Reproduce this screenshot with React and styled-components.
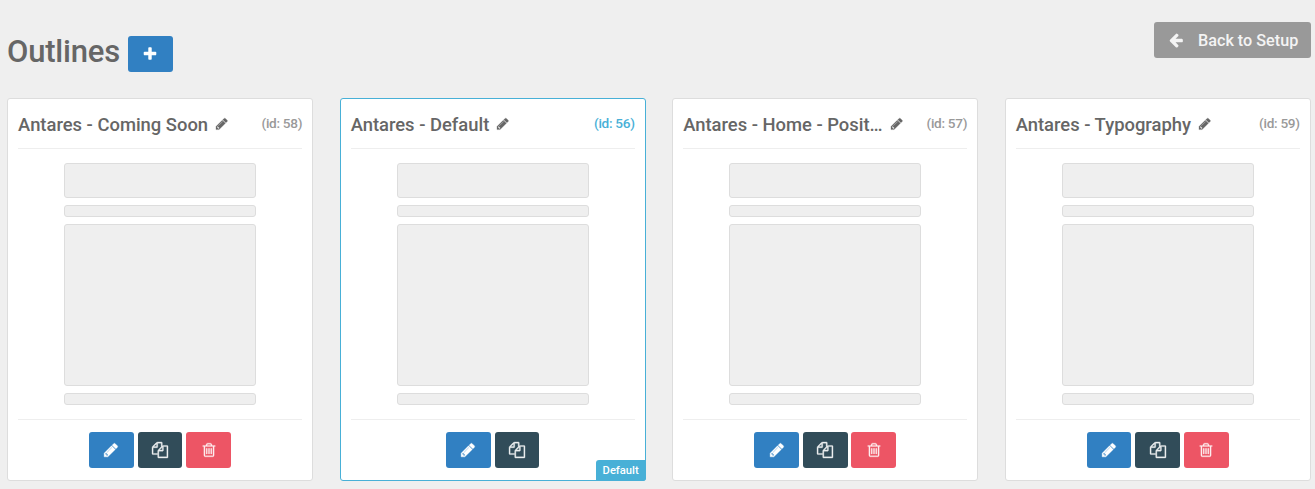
import React from "react";
import styled, { createGlobalStyle } from "styled-components";

const GlobalStyle = createGlobalStyle`
  *, *::before, *::after { box-sizing: border-box; }
  body {
    margin: 0;
    background: #efefef;
    color: #666;
    font-family: Roboto, "Liberation Sans", sans-serif;
    font-size: 16px;
    font-weight: 500;
    overflow: hidden;
  }
`;

const ICONS = {
  plus: "M1600 736v192q0 40-28 68t-68 28h-416v416q0 40-28 68t-68 28h-192q-40 0-68-28t-28-68v-416h-416q-40 0-68-28t-28-68v-192q0-40 28-68t68-28h416v-416q0-40 28-68t68-28h192q40 0 68 28t28 68v416h416q40 0 68 28t28 68z",
  arrow: "M1664 896v128q0 53-32.5 90.5t-84.5 37.5h-704l293 294q38 36 38 90t-38 90l-75 76q-37 37-90 37-52 0-91-37l-651-652q-37-37-37-90 0-52 37-91l651-650q38-38 91-38 52 0 90 38l75 74q38 38 38 91t-38 91l-293 293h704q52 0 84.5 37.5t32.5 90.5z",
  pencil: "M491 1536l91-91-235-235-91 91v107h128v128h107zm523-928q0-22-22-22-10 0-17 7l-542 542q-7 7-7 17 0 22 22 22 10 0 17-7l542-542q7-7 7-17zm-54-192l416 416-832 832h-416v-416zm683 96q0 53-37 90l-166 166-416-416 166-165q36-38 90-38 53 0 91 38l235 234q37 39 37 91z",
  copy: "M1696 384q40 0 68 28t28 68v1216q0 40-28 68t-68 28h-960q-40 0-68-28t-28-68v-288h-544q-40 0-68-28t-28-68v-672q0-40 20-88t48-76l408-408q28-28 76-48t88-20h416q40 0 68 28t28 68v328q68-40 128-40h416zm-544 213l-299 299h299v-299zm-640-384l-299 299h299v-299zm196 647l316-316v-416h-384v416q0 40-28 68t-68 28h-416v640h512v-256q0-40 20-88t48-76zm956 804v-1152h-384v416q0 40-28 68t-68 28h-416v640h896z",
  trash: "M704 736v576q0 14-9 23t-23 9h-64q-14 0-23-9t-9-23v-576q0-14 9-23t23-9h64q14 0 23 9t9 23zm256 0v576q0 14-9 23t-23 9h-64q-14 0-23-9t-9-23v-576q0-14 9-23t23-9h64q14 0 23 9t9 23zm256 0v576q0 14-9 23t-23 9h-64q-14 0-23-9t-9-23v-576q0-14 9-23t23-9h64q14 0 23 9t9 23zm128 724v-948h-896v948q0 22 7 40.5t14.5 27 10.5 8.5h832q3 0 10.5-8.5t14.5-27 7-40.5zm-672-1076h448l-48-117q-7-9-17-11h-317q-10 2-17 11zm928 32v64q0 14-9 23t-23 9h-96v948q0 83-47 143.5t-113 60.5h-832q-66 0-113-58.5t-47-141.5v-952h-96q-14 0-23-9t-9-23v-64q0-14 9-23t23-9h309l70-167q15-37 54-63t79-26h320q40 0 79 26t54 63l70 167h309q14 0 23 9t9 23z",
};

const Glyph = styled.svg`
  display: block;
  flex: none;
  overflow: visible;
  width: ${(p) => p.$size}px;
  height: ${(p) => p.$size}px;
  fill: currentColor;
  stroke: currentColor;
  stroke-width: ${(p) => p.$weight};
`;

const Icon = ({ name, size = 16, weight = 0 }) => (
  <Glyph $size={size} $weight={weight} viewBox="0 0 1792 1792" aria-hidden="true">
    <path d={ICONS[name]} />
  </Glyph>
);

const Page = styled.main`
  width: 1315px;
  height: 489px;
  padding: 22px 4px 0 7px;
`;

const Header = styled.header`
  display: flex;
  justify-content: space-between;
  align-items: flex-start;
  height: 76px;
`;

const HeadingGroup = styled.div`
  display: flex;
  align-items: flex-start;
  gap: 8px;
  padding-top: 14px;
`;

const Heading = styled.h1`
  margin: 0;
  width: 113px;
  font-size: 31px;
  font-weight: 500;
  letter-spacing: -0.2px;
  line-height: 31px;
  white-space: nowrap;
`;

const TONES = { blue: "#3180c2", dark: "#314c59", red: "#ed5565" };

const Button = styled.button`
  display: flex;
  align-items: center;
  justify-content: center;
  width: 44.8px;
  height: 36px;
  padding: 0;
  border: 0;
  border-radius: 3px;
  background: ${(p) => TONES[p.$tone]};
  color: ${(p) => (p.$tone === "blue" ? "#fff" : "rgba(255, 255, 255, 0.88)")};
`;

const AddButton = styled(Button)`
  width: 45px;
  padding-right: 1px;
`;

const BackButton = styled.a`
  display: flex;
  align-items: center;
  gap: 14px;
  width: 157px;
  height: 36px;
  padding: 0 0 0 14px;
  border-radius: 3px;
  background: #999;
  color: #f4f4f4;
  font-size: 16.2px;
  white-space: nowrap;
`;

const Cards = styled.section`
  display: grid;
  grid-template-columns: repeat(4, 306px);
  justify-content: space-between;
  margin: 0 0.3px 0 0.1px;
`;

const Card = styled.article`
  position: relative;
  height: 383px;
  padding: 0 10px;
  border: 1px solid ${(p) => (p.$active ? "#48b0d7" : "#ddd")};
  border-radius: 3px;
  background: #fff;
`;

const CardHeader = styled.div`
  display: flex;
  align-items: center;
  height: 50px;
  border-bottom: 1px solid #eee;
`;

const Title = styled.h2`
  margin: 0 7px 0 0;
  white-space: nowrap;
  font-size: 18.4px;
  font-weight: 500;
  line-height: 26px;
  padding-top: 2px;
`;

const OutlineId = styled.span`
  margin-left: auto;
  padding-bottom: 2px;
  color: ${(p) => (p.$active ? "#48b0d7" : "#999")};
  font-size: 13.6px;
  font-weight: 500;
  letter-spacing: -0.3px;
  line-height: 20px;
`;

const Preview = styled.div`
  display: flex;
  flex-direction: column;
  align-items: center;
  gap: 7px;
  height: 271px;
  padding-top: 14px;
  border-bottom: 1px solid #eee;
`;

const Block = styled.div`
  width: 192px;
  height: ${(p) => p.$height}px;
  border: 1px solid #ddd;
  border-radius: 3px;
  background: #efefef;
`;

const Actions = styled.div`
  display: flex;
  justify-content: center;
  gap: 3.8px;
  padding-top: 12px;
`;

const Badge = styled.span`
  position: absolute;
  right: -1px;
  bottom: -1px;
  width: 50px;
  height: 21px;
  border-radius: 3px 0 3px 0;
  background: #48b0d7;
  color: #fff;
  font-size: 11.2px;
  line-height: 21px;
  text-align: center;
`;

const outlines = [
  { id: 58, title: "Antares - Coming Soon" },
  { id: 56, title: "Antares - Default", isDefault: true },
  { id: 57, title: "Antares - Home - Posit…" },
  { id: 59, title: "Antares - Typography" },
];

const OutlineCard = ({ id, title, isDefault }) => (
  <Card $active={isDefault}>
    <CardHeader>
      <Title>{title}</Title>
      <Icon name="pencil" size={13.6} weight={30} />
      <OutlineId $active={isDefault}>(id: {id})</OutlineId>
    </CardHeader>
    <Preview>
      <Block $height={35} />
      <Block $height={12} />
      <Block $height={162} />
      <Block $height={12} />
    </Preview>
    <Actions>
      <Button $tone="blue" aria-label="Edit"><Icon name="pencil" weight={40} /></Button>
      <Button $tone="dark" aria-label="Duplicate"><Icon name="copy" weight={40} /></Button>
      {!isDefault && (
        <Button $tone="red" aria-label="Delete"><Icon name="trash" weight={30} /></Button>
      )}
    </Actions>
    {isDefault && <Badge>Default</Badge>}
  </Card>
);

export default function App() {
  return (
    <Page>
      <GlobalStyle />
      <Header>
        <HeadingGroup>
          <Heading>Outlines</Heading>
          <AddButton $tone="blue" aria-label="Add"><Icon name="plus" /></AddButton>
        </HeadingGroup>
        <BackButton>
          <Icon name="arrow" />
          Back to Setup
        </BackButton>
      </Header>
      <Cards>
        {outlines.map((o) => (
          <OutlineCard key={o.id} {...o} />
        ))}
      </Cards>
    </Page>
  );
}
